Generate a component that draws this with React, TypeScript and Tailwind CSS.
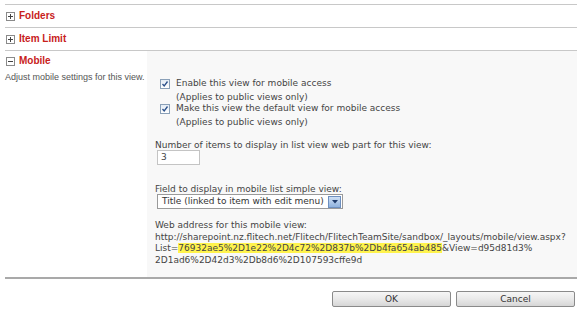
import React from 'react';

const font = { fontFamily: '"DejaVu Sans", Verdana, sans-serif' };
const headFont = { fontFamily: '"Liberation Sans", Arial, sans-serif' };

function ToggleIcon({ open }: { open?: boolean }) {
    return (
        <svg width="9" height="9" viewBox="0 0 9 9" className="shrink-0">
            <rect x="0.5" y="0.5" width="8" height="8" fill="#fff" stroke="#8a8a8a" />
            <line x1="2" y1="4.5" x2="7" y2="4.5" stroke="#444" />
            {!open && <line x1="4.5" y1="2" x2="4.5" y2="7" stroke="#444" />}
        </svg>
    );
}

function SectionHeader({ title, open }: { title: string; open?: boolean }) {
    return (
        <div className="flex items-center gap-[4px] h-[23px] pl-[1px] border-t border-[#c8c8c8]">
            <ToggleIcon open={open} />
            <span className="text-[10px] font-bold text-[#c8211b] leading-none" style={headFont}>{title}</span>
        </div>
    );
}

function Check({ label }: { label: string }) {
    return (
        <div className="flex flex-col">
            <div className="flex items-center gap-[6px]">
                <div className="w-[10px] h-[10px] border border-[#8aa0b8] bg-gradient-to-b from-[#e4ecf5] to-[#ffffff] flex items-center justify-center">
                    <svg width="8" height="8" viewBox="0 0 8 8">
                        <path d="M1.5 4 L3.2 6 L6.5 1.5" fill="none" stroke="#2a4f8a" strokeWidth="1.3" />
                    </svg>
                </div>
                <span>{label}</span>
            </div>
            <span className="pl-[16px] mt-[2px]">(Applies to public views only)</span>
        </div>
    );
}

export default function App() {
    return (
        <div className="w-[579px] h-[325px] bg-white text-[9px] text-[#444] leading-[11.5px] overflow-hidden" style={font}>
            <div className="pt-[4px] pl-[5px] pr-[2px]">
                <SectionHeader title="Folders" />
                <SectionHeader title="Item Limit" />
                <div className="border-t border-[#c8c8c8] flex">
                    {/* left: title + description */}
                    <div className="w-[142px] shrink-0">
                        <div className="flex items-center gap-[4px] h-[20px] pl-[1px]">
                            <ToggleIcon open />
                            <span className="text-[10px] font-bold text-[#c8211b] leading-none" style={headFont}>Mobile</span>
                        </div>
                        <div className="text-[#555] text-[9px] mt-[1px] whitespace-nowrap" style={headFont}>Adjust mobile settings for this view.</div>
                    </div>

                    {/* right: settings */}
                    <div className="flex-1 bg-[#f8f8f8] h-[226px] pl-[8px] pt-[27px]">
                        <div className="flex flex-col pl-[5px]">
                            <Check label="Enable this view for mobile access" />
                            <Check label="Make this view the default view for mobile access" />
                        </div>

                        <div className="mt-[12px]">Number of items to display in list view web part for this view:</div>
                        <div className="mt-[-2px] ml-[2px] w-[43px] h-[15px] bg-white border border-[#c4c4c4] pl-[3px] leading-[13px]">3</div>

                        <div className="mt-[19px]">Field to display in mobile list simple view:</div>
                        <div className="mt-[-1px] ml-[2px] w-[186px] h-[15px] bg-white border border-[#9a9a9a] flex items-center">
                            <span className="flex-1 pl-[4px] text-[#333] text-[9px] whitespace-nowrap">Title (linked to item with edit menu)</span>
                            <div className="w-[13px] h-[12px] mr-[1px] bg-gradient-to-b from-[#cfe0f4] to-[#8fb2de] border border-[#6d8fbf] flex items-center justify-center">
                                <svg width="6" height="4" viewBox="0 0 6 4">
                                    <path d="M0 0 L6 0 L3 3.5 Z" fill="#1e3a6a" />
                                </svg>
                            </div>
                        </div>

                        <div className="mt-[11px]">Web address for this mobile view:</div>
                        <div className="whitespace-nowrap">
                            <div>http://sharepoint.nz.flitech.net/Flitech/FlitechTeamSite/sandbox/_layouts/mobile/view.aspx?</div>
                            <div>
                                List=<span className="bg-[#fff34d]">76932ae5%2D1e22%2D4c72%2D837b%2Db4fa654ab485</span>&amp;View=d95d81d3%
                            </div>
                            <div>2D1ad6%2D42d3%2Db8d6%2D107593cffe9d</div>
                        </div>
                    </div>
                </div>

                <div className="border-t-2 border-[#a9a9a9]" />

                <div className="flex justify-end gap-[5px] mt-[12px] pr-[2px]">
                    <button className="w-[119px] h-[16px] rounded-[2px] border border-[#8a8a8a] bg-gradient-to-b from-[#f6f6f6] via-[#e9e9e9] to-[#d6d6d6] text-[9px] text-[#333] leading-none">OK</button>
                    <button className="w-[119px] h-[16px] rounded-[2px] border border-[#8a8a8a] bg-gradient-to-b from-[#f6f6f6] via-[#e9e9e9] to-[#d6d6d6] text-[9px] text-[#333] leading-none">Cancel</button>
                </div>
            </div>
        </div>
    );
}
